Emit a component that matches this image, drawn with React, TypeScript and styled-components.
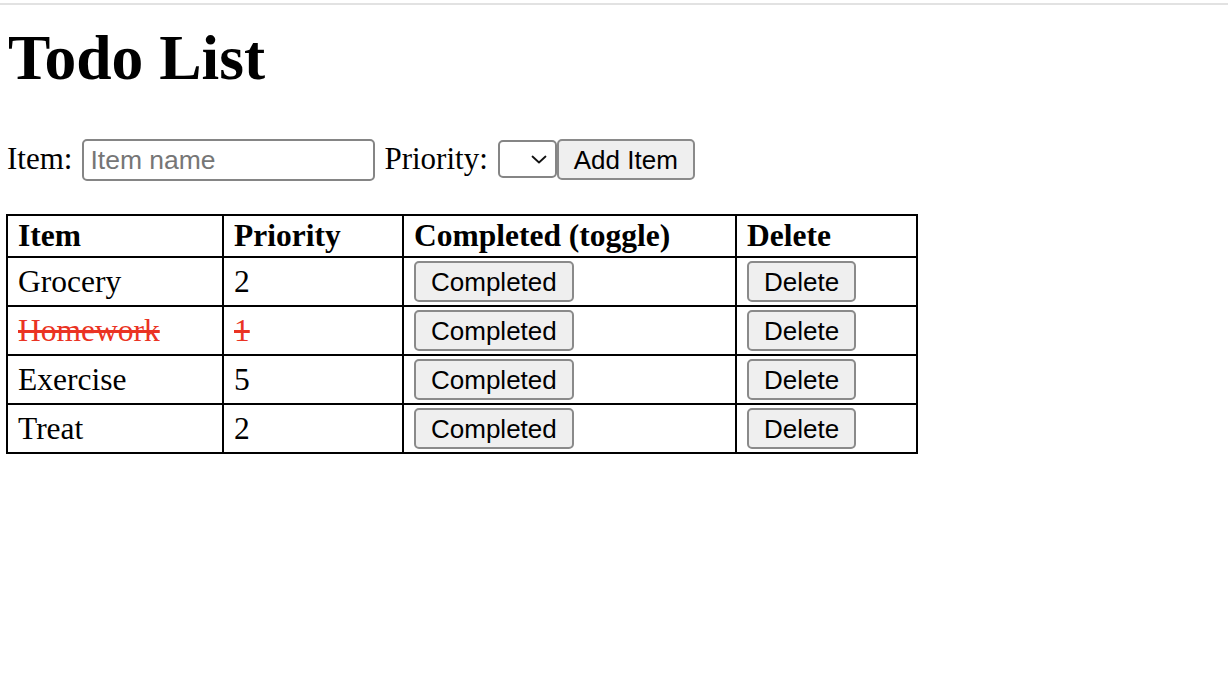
import React from "react";
import styled, { createGlobalStyle } from "styled-components";

const GlobalStyle = createGlobalStyle`
  html, body {
    margin: 0;
    padding: 0;
    background: #ffffff;
  }
  body {
    font-family: "Liberation Serif", "Times New Roman", serif;
    color: #000000;
  }
`;

const Page = styled.div`
  margin-top: 3px;
  border-top: 2px solid #e2e2e2;
  padding: 0 0 0 6px;
  min-height: 670px;
  box-sizing: border-box;
`;

const Title = styled.h1`
  margin: 18px 0 0 2px;
  font-family: "Liberation Serif", "Times New Roman", serif;
  font-size: 63.5px;
  line-height: 70px;
  font-weight: 700;
`;

const FormRow = styled.div`
  display: flex;
  align-items: baseline;
  margin-top: 46px;
  margin-left: 1px;
  font-family: "Liberation Serif", "Times New Roman", serif;
  font-size: 31px;
`;

const Label = styled.span<{ $gap: number }>`
  margin-right: ${(p) => p.$gap}px;
  white-space: nowrap;
`;

const TextInput = styled.input`
  box-sizing: border-box;
  width: 293px;
  height: 42px;
  margin-right: 9px;
  padding: 0 6px;
  border: 2px solid #858585;
  border-radius: 5px;
  background: #ffffff;
  font-family: "Liberation Sans", Arial, sans-serif;
  font-size: 26.5px;
  color: #000;
  outline: none;
  &::placeholder {
    color: #767676;
  }
`;

const SelectWrap = styled.span`
  position: relative;
  align-self: flex-start;
  margin-top: 1px;
  display: inline-block;
  width: 59px;
  height: 38px;
`;

const Select = styled.select`
  box-sizing: border-box;
  appearance: none;
  -webkit-appearance: none;
  width: 59px;
  height: 38px;
  border: 2px solid #858585;
  border-radius: 5px;
  background: #ffffff;
  font-family: "Liberation Sans", Arial, sans-serif;
  font-size: 26px;
  outline: none;
`;

const Chevron = styled.svg`
  position: absolute;
  right: 10px;
  top: 15px;
  width: 16px;
  height: 9px;
  pointer-events: none;
`;

const Button = styled.button`
  box-sizing: border-box;
  height: 41px;
  padding: 0 15px;
  border: 2px solid #8a8a8a;
  border-radius: 5px;
  background: #efefef;
  color: #000000;
  font-family: "Liberation Sans", Arial, sans-serif;
  font-size: 26px;
  line-height: 30px;
  vertical-align: middle;
  cursor: pointer;
`;

const Table = styled.table`
  margin-top: 33px;
  border-collapse: collapse;
  table-layout: fixed;
  width: 911px;
  font-family: "Liberation Serif", "Times New Roman", serif;
  font-size: 31.5px;
`;

const Th = styled.th<{ $w: number }>`
  width: ${(p) => p.$w}px;
  height: 42px;
  padding: 0 10px;
  border: 2px solid #000000;
  text-align: left;
  font-weight: 700;
  vertical-align: middle;
  box-sizing: border-box;
`;

const Td = styled.td<{ $done?: boolean }>`
  height: 47px;
  padding: 0 10px;
  border: 2px solid #000000;
  vertical-align: middle;
  color: ${(p) => (p.$done ? "#ea3323" : "#000000")};
  text-decoration: ${(p) => (p.$done ? "line-through" : "none")};
`;

type Todo = { name: string; priority: number; done: boolean };

const todos: Todo[] = [
  { name: "Grocery", priority: 2, done: false },
  { name: "Homework", priority: 1, done: true },
  { name: "Exercise", priority: 5, done: false },
  { name: "Treat", priority: 2, done: false },
];

export default function App() {
  return (
    <>
      <GlobalStyle />
      <Page>
        <Title>Todo List</Title>
        <FormRow>
          <Label $gap={10}>Item:</Label>
          <TextInput placeholder="Item name" />
          <Label $gap={10}>Priority:</Label>
          <SelectWrap>
            <Select defaultValue="">
              <option value=""></option>
            </Select>
            <Chevron viewBox="0 0 16 9">
              <path d="M1.5 1.5 L8 7.5 L14.5 1.5" fill="none" stroke="#111" strokeWidth="1.8" strokeLinecap="round" strokeLinejoin="round" />
            </Chevron>
          </SelectWrap>
          <Button>Add Item</Button>
        </FormRow>
        <Table>
          <thead>
            <tr>
              <Th $w={216}>Item</Th>
              <Th $w={180}>Priority</Th>
              <Th $w={333}>Completed (toggle)</Th>
              <Th $w={181}>Delete</Th>
            </tr>
          </thead>
          <tbody>
            {todos.map((t) => (
              <tr key={t.name}>
                <Td $done={t.done}>{t.name}</Td>
                <Td $done={t.done}>{t.priority}</Td>
                <Td>
                  <Button>Completed</Button>
                </Td>
                <Td>
                  <Button>Delete</Button>
                </Td>
              </tr>
            ))}
          </tbody>
        </Table>
      </Page>
    </>
  );
}
